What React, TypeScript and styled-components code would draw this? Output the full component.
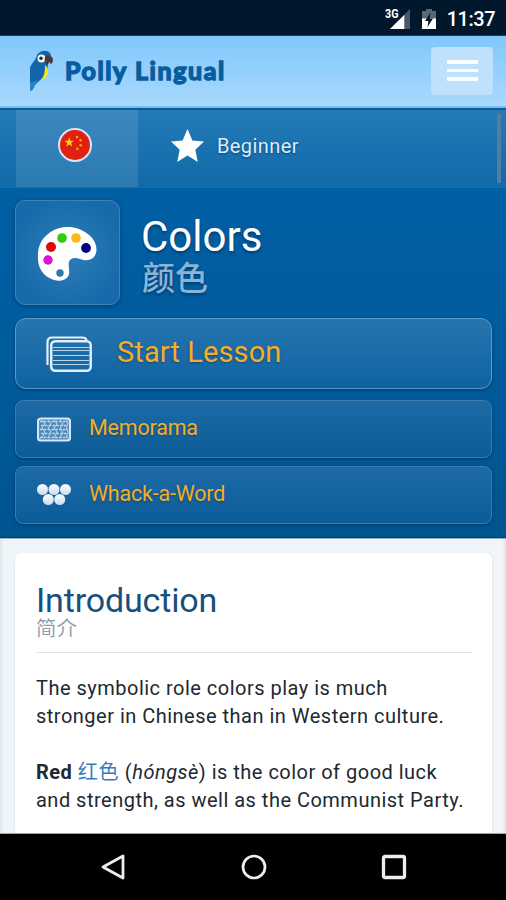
import React from 'react';
import styled, { createGlobalStyle } from 'styled-components';

const Global = createGlobalStyle`
  * { box-sizing: border-box; }
  body { margin: 0; background: #000; font-family: Roboto, "Noto Sans CJK SC", sans-serif; }
  h1, h2, p { margin: 0; font-weight: 400; }
  button { font: inherit; border: 0; padding: 0; }
  svg { display: block; flex: none; }
`;

const Screen = styled.div`
  width: 506px;
  height: 900px;
  display: flex;
  flex-direction: column;
  overflow: hidden;
`;

const StatusBar = styled.div`
  flex: 0 0 36px;
  background: #01172c;
  border-bottom: 1px solid #1c3c5a;
  display: flex;
  justify-content: flex-end;
  align-items: center;
  gap: 10px;
  padding: 2px 11px 0 0;
`;

const Clock = styled.span`
  color: #fff;
  font-size: 20px;
  font-weight: 500;
  line-height: 24px;
  letter-spacing: -0.5px;
`;

const Header = styled.header`
  flex: 0 0 72px;
  background: linear-gradient(#80c8fc, #a9d8fd);
  border-bottom: 2px solid #79bcec;
  display: flex;
  align-items: center;
  padding: 0 13px 1px 28px;
`;

const Brand = styled.span`
  flex: 1;
  margin: 0 0 2px 11px;
  color: #075da0;
  -webkit-text-stroke: 1.5px #075da0;
  font-family: Lato, sans-serif;
  font-size: 25px;
  font-weight: 700;
  line-height: 32px;
  letter-spacing: 1.6px;
`;

const MenuButton = styled.button`
  width: 62px;
  height: 48px;
  border-radius: 4px;
  background: #bfe1fb;
  display: flex;
  flex-direction: column;
  align-items: center;
  justify-content: center;
  gap: 5px;
`;

const MenuLine = styled.span`
  width: 31px;
  height: 3.4px;
  border-radius: 1px;
  background: #fff;
`;

const Crumbs = styled.nav`
  flex: 0 0 80px;
  background: linear-gradient(#237ab6, #1169a9);
  border-top: 2px solid #0a5c9c;
  border-bottom: 1px solid #1a6da6;
  display: flex;
  padding: 0 5px 0 16px;
`;

const LanguageTab = styled.div`
  width: 122px;
  background: rgba(255, 255, 255, 0.115);
  display: flex;
  align-items: center;
  justify-content: center;
  padding: 0 4px 7px 0;
`;

const LevelTab = styled.div`
  flex: 1;
  display: flex;
  align-items: center;
  padding: 0 0 5px 33px;
`;

const LevelName = styled.span`
  color: #deebf8;
  font-size: 20px;
  line-height: 26px;
  letter-spacing: 0.4px;
  margin-left: 13px;
  text-shadow: 0 1px 2px #07497e;
`;

const ScrollThumb = styled.span`
  width: 4px;
  height: 69px;
  margin-top: 4px;
  background: #527d9f;
`;

const Hero = styled.section`
  flex: 0 0 350px;
  background: linear-gradient(#0060a4, #005a9a 60%, #00548e);
  border-bottom: 1px solid #003f73;
  padding: 12px 14px 0 15px;
`;

const TopicRow = styled.div`
  display: flex;
  height: 105px;
`;

const TopicTile = styled.div`
  width: 105px;
  height: 105px;
  border: 1.5px solid #4182b5;
  border-radius: 10px;
  background: radial-gradient(circle, #2d7db8 0%, #1769a9 80%);
  box-shadow: 0 1px 4px rgba(0, 30, 70, 0.5);
  display: flex;
  align-items: center;
  justify-content: center;
  padding: 2px 2px 0 0;
`;

const TopicNames = styled.div`
  padding: 13px 0 0 22px;
  text-shadow: 0 2px 3px #003c70;
`;

const TopicTitle = styled.h1`
  color: #fff;
  font-size: 42px;
  line-height: 48px;
  letter-spacing: 0;
  margin-left: -1px;
`;

const TopicNative = styled.p`
  color: #8bb4d7;
  font-size: 33px;
  font-weight: 500;
  line-height: 33px;
  margin-top: 1px;
`;

const Action = styled.button<{ $primary?: boolean }>`
  display: flex;
  align-items: center;
  width: 477px;
  height: ${p => (p.$primary ? 71 : 58)}px;
  padding: 0 0 3px ${p => (p.$primary ? 30 : 21)}px;
  border: ${p => (p.$primary ? '1.5px solid #5b99c8' : '1px solid #397bac')};
  border-radius: ${p => (p.$primary ? 11 : 8)}px;
  background: ${p => (p.$primary ? 'linear-gradient(#2675ae, #0f62a2)' : 'linear-gradient(#1d6ba5, #0c5c99)')};
  box-shadow: 0 1px 3px rgba(0, 30, 70, 0.55);
  color: #f2ae2b;
  font-size: ${p => (p.$primary ? 29 : 21.5)}px;
  line-height: 34px;
  text-shadow: 0 1px 2px #174a70;

  svg { margin-top: ${p => (p.$primary ? 4 : 3)}px; }
`;

const Actions = styled.div`
  display: flex;
  flex-direction: column;
  margin-top: 13px;
`;

const Games = styled.div`
  display: flex;
  flex-direction: column;
  gap: 8px;
  margin-top: 11px;
`;

const ActionText = styled.span<{ $gap: number; $track: number }>`
  margin-left: ${p => p.$gap}px;
  letter-spacing: ${p => p.$track}px;
`;

const Content = styled.main`
  flex: 0 0 296px;
  background: linear-gradient(90deg, #dde5eb, #f0f5f9 4px, #f0f5f9 502px, #dde5eb);
  border-top: 1px solid #9db4c8;
  border-bottom: 1px solid #a5a5a5;
  padding: 14px 14px 0 15px;
`;

const Article = styled.article`
  height: 280px;
  background: #fff;
  border-radius: 6px 6px 0 0;
  box-shadow: 0 1px 3px rgba(80, 110, 140, 0.18);
  padding: 27px 20px 0 21px;
`;

const Heading = styled.h2`
  color: #174f7d;
  font-size: 34px;
  line-height: 40px;
  letter-spacing: -0.15px;
`;

const HeadingNative = styled.p`
  color: #8d9dac;
  font-size: 20.5px;
  font-weight: 350;
  line-height: 22px;
  margin-top: -2px;
  height: 35px;
  border-bottom: 1px solid #e2e5e8;
`;

const Paragraph = styled.p`
  color: #202832;
  font-size: 20px;
  line-height: 28px;
  letter-spacing: 0.49px;
  margin-top: 21px;
  white-space: nowrap;

  & + & { margin-top: 28px; }
`;

const Term = styled.span`
  color: #347dbc;
  letter-spacing: 0.8px;
`;

const NavBar = styled.footer`
  flex: 0 0 66px;
  background: #000;
  display: grid;
  grid-template-columns: repeat(3, 140.5px);
  justify-content: center;
  align-items: center;
  justify-items: center;
  padding-left: 1px;
`;

const ParrotLogo = () => (
  <svg width="26" height="42" viewBox="0 0 26 42">
    <path d="M9 5C12 0 21-1 23 5L20 12C20 20 18 26 11 31L7 35C6 38 4 41 2 41L2 19C2 14 7 12 9 5Z" fill="#1264ab" />
    <path d="M17 15C22 19 21 28 13 30C17 25 17 20 17 15Z" fill="#ffe60b" />
    <path d="M2 33L10 30L7 35C5 38 4 41 2 41Z" fill="#2c84c5" />
    <ellipse cx="13.5" cy="8.5" rx="4" ry="4.1" fill="#f4f5ef" />
    <circle cx="13" cy="8.3" r="1.7" fill="#242b32" />
    <path d="M17 7C20 4 25 6 25 10C25 12 24 13 23 14L21 12L20 15C17 14 16 11 17 7Z" fill="#483a3e" />
  </svg>
);

const Signal = () => (
  <svg width="26" height="22" viewBox="0 0 26 22">
    <path d="M25 1V21H19V7Z" fill="#45586a" />
    <path d="M5 21L19.3 6.8V21Z" fill="#fff" />
    <text x="0" y="10" fill="#fff" stroke="#01172c" strokeWidth="1" paintOrder="stroke" fontFamily="Roboto" fontSize="12.500" fontWeight="700" textLength="13.500" lengthAdjust="spacingAndGlyphs">3G</text>
  </svg>
);

const Battery = () => (
  <svg width="16" height="22" viewBox="0 0 16 22">
    <path d="M5 1H11V3H15V11H1V3H5Z" fill="#5a6873" />
    <path d="M1 10.5H15V21H1Z" fill="#fff" />
    <path d="M9.5 4.5L4 13H7.4L6.5 19L12 10.5H8.7Z" fill="#01172c" />
  </svg>
);

const Flag = () => (
  <svg width="36" height="36" viewBox="0 0 36 36">
    <circle cx="18" cy="18" r="16" fill="#de2110" stroke="#dfe2f0" strokeWidth="2" />
    <path d="M12.2 10.3L13.4 13.8H17L14.1 16L15.2 19.5L12.2 17.4L9.2 19.5L10.3 16L7.4 13.8H11Z" fill="#ffcf10" />
    <g fill="#f0a51a">
      <circle cx="20" cy="10" r="1.3" />
      <circle cx="23.5" cy="13.3" r="1.3" />
      <circle cx="23.7" cy="18.2" r="1.3" />
      <circle cx="20.3" cy="21.8" r="1.3" />
    </g>
  </svg>
);

const Star = () => (
  <svg width="33" height="34" viewBox="0 0 33 34">
    <path d="M16.5 0L21.4 11.4L33 12.5L24.3 20.7L26.8 33L16.5 26.5L6.2 33L8.7 20.7L0 12.5L11.6 11.4Z" fill="#fff" />
  </svg>
);

const Palette = () => (
  <svg width="60" height="56" viewBox="0 0 60 56">
    <path d="M29 1C44 0 60 11 59.500 24C59 32 53 35 47 34C42 33 37 30 33 34C30 38 33 43 32 48C31 54 23 56 17 54C6 51 0 41 1 29C1 13 14 2 29 1Z" fill="#fff" />
    <circle cx="25" cy="12" r="4.800" fill="#2dce0b" />
    <circle cx="39" cy="12" r="4.800" fill="#ffb915" />
    <circle cx="49" cy="22" r="4.900" fill="#02007f" />
    <circle cx="14" cy="21" r="5" fill="#de080c" />
    <circle cx="11" cy="34" r="4.700" fill="#db12d4" />
    <circle cx="23" cy="47" r="3.700" fill="#287bad" />
  </svg>
);

const Cards = () => (
  <svg width="46" height="36" viewBox="0 0 46 36" fill="none" stroke="#e3effb">
    <path d="M1.500 29V6Q1.500 1.500 6 1.500H36Q40 1.500 40.500 4" strokeWidth="2.200" />
    <rect x="5.200" y="5.200" width="39.500" height="29.500" rx="4" strokeWidth="2.500" />
    <path d="M7 11.500H43M7 14.500H43M7 19.500H43M7 24.500H43M7 28.500H43" strokeWidth="1" opacity=".8" />
  </svg>
);

const Tiles = () => (
  <svg width="34" height="25" viewBox="0 0 34 25">
    <rect x="1" y="1.500" width="32" height="22" rx="3" fill="#4a88bb" stroke="#d4e5f5" strokeWidth="2.200" />
    <g stroke="#c6daec" strokeWidth="1.300" strokeDasharray="2.600 1.200">
      <path d="M3 4.500H31" /><path d="M4 8.500H31" /><path d="M3 12.500H31" /><path d="M4 16.500H31" /><path d="M3 20.500H31" />
    </g>
    <path d="M5 3L8 7L5 11L8 15L5 21M11 3L14 7L11 11L14 15L11 21M17 3L20 7L17 11L20 15L17 21M23 3L26 7L23 11L26 15L23 21M29 3L31 7L29 11L31 15L29 21" fill="none" stroke="#b3cde4" strokeWidth="1.100" />
  </svg>
);

const Balls = () => (
  <svg width="34" height="22" viewBox="0 0 34 22">
    <defs>
      <linearGradient id="ball" x1="0" y1="0" x2="0" y2="1">
        <stop offset="0" stopColor="#fff" />
        <stop offset="1" stopColor="#c8dbef" />
      </linearGradient>
    </defs>
    <g fill="url(#ball)">
      <circle cx="5.500" cy="5.500" r="5.500" /><circle cx="17" cy="5.500" r="5.500" /><circle cx="28.500" cy="5.500" r="5.500" />
      <circle cx="11.300" cy="15.500" r="5.500" /><circle cx="22.700" cy="15.500" r="5.500" />
    </g>
  </svg>
);

export default function App() {
  return (
    <Screen>
      <Global />
      <StatusBar>
        <Signal />
        <Battery />
        <Clock>11:37</Clock>
      </StatusBar>
      <Header>
        <ParrotLogo />
        <Brand>Polly Lingual</Brand>
        <MenuButton aria-label="Menu">
          <MenuLine /><MenuLine /><MenuLine />
        </MenuButton>
      </Header>
      <Crumbs>
        <LanguageTab><Flag /></LanguageTab>
        <LevelTab><Star /><LevelName>Beginner</LevelName></LevelTab>
        <ScrollThumb />
      </Crumbs>
      <Hero>
        <TopicRow>
          <TopicTile><Palette /></TopicTile>
          <TopicNames>
            <TopicTitle>Colors</TopicTitle>
            <TopicNative>颜色</TopicNative>
          </TopicNames>
        </TopicRow>
        <Actions>
          <Action $primary><Cards /><ActionText $gap={25} $track={0.1}>Start Lesson</ActionText></Action>
          <Games>
            <Action><Tiles /><ActionText $gap={18} $track={-0.2}>Memorama</ActionText></Action>
            <Action><Balls /><ActionText $gap={18} $track={-0.2}>Whack-a-Word</ActionText></Action>
          </Games>
        </Actions>
      </Hero>
      <Content>
        <Article>
          <Heading>Introduction</Heading>
          <HeadingNative>简介</HeadingNative>
          <Paragraph>The symbolic role colors play is much<br />stronger in Chinese than in Western culture.</Paragraph>
          <Paragraph><b>Red</b> <Term>红色</Term> (<i>hóngsè</i>) is the color of good luck<br />and strength, as well as the Communist Party.</Paragraph>
        </Article>
      </Content>
      <NavBar>
        <svg width="26" height="28" viewBox="0 0 26 28"><path d="M3 14L23 3V25Z" fill="none" stroke="#eee" strokeWidth="2.800" strokeLinejoin="round" /></svg>
        <svg width="26" height="26" viewBox="0 0 26 26"><circle cx="13" cy="13" r="11" fill="none" stroke="#eee" strokeWidth="2.700" /></svg>
        <svg width="26" height="26" viewBox="0 0 26 26"><rect x="2.500" y="2.500" width="21" height="21" rx="1.500" fill="none" stroke="#eee" strokeWidth="3.300" /></svg>
      </NavBar>
    </Screen>
  );
}
